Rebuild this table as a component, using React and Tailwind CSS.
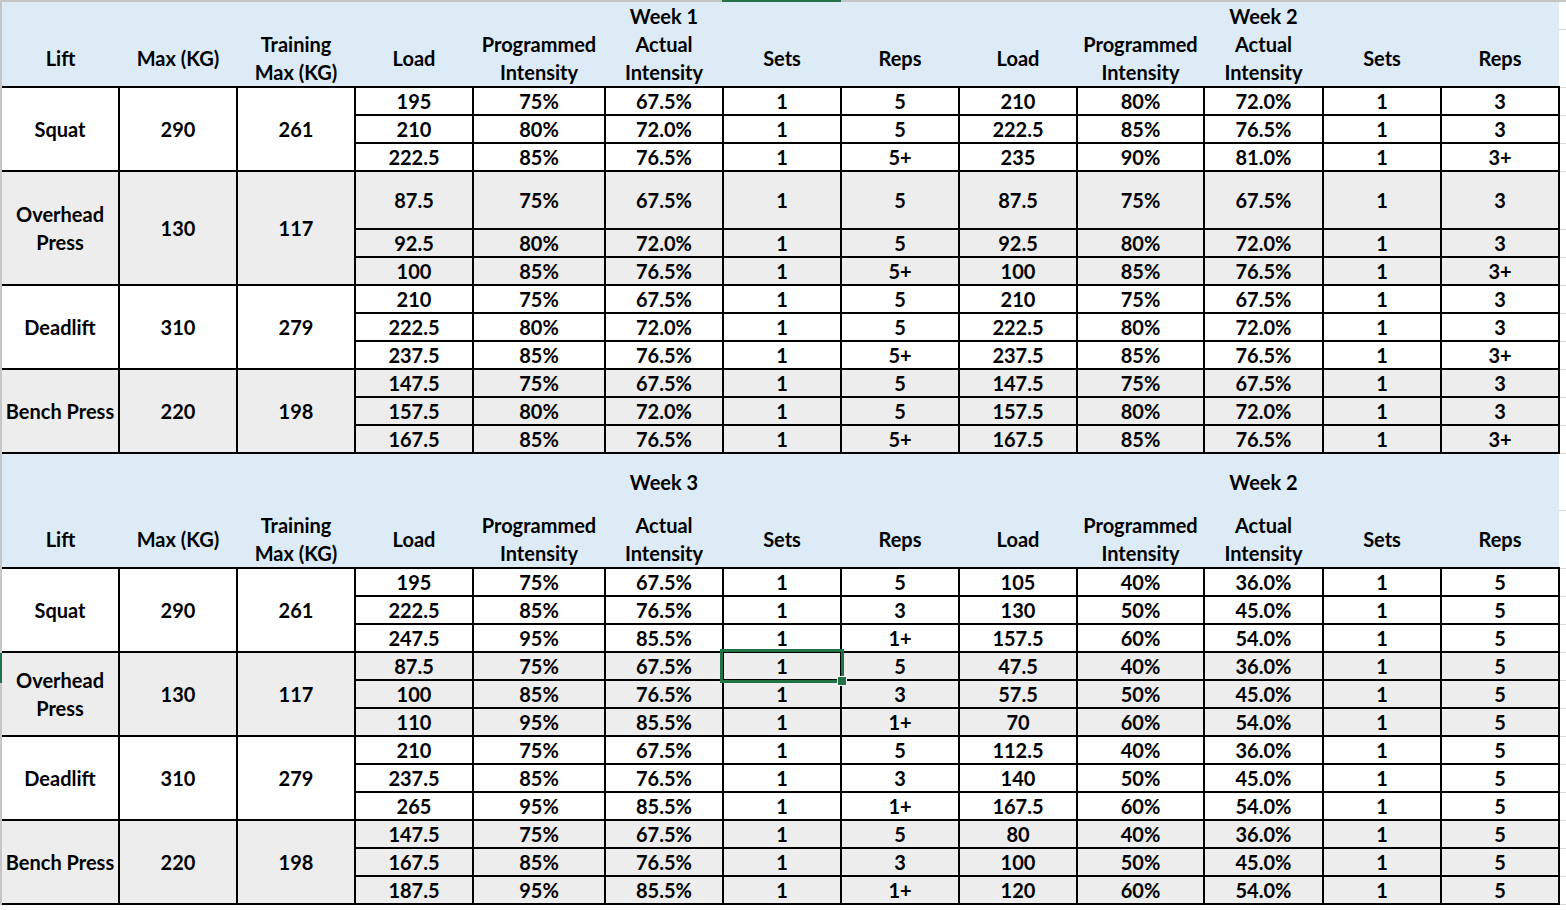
import React from "react";

const COLS = [117, 118, 118, 118, 132, 118, 118, 118, 118, 127, 119, 118, 118];

const SUB = ["Load", ["Programmed", "Intensity"], ["Actual", "Intensity"], "Sets", "Reps"];
const HEAD = ["Lift", "Max (KG)", ["Training", "Max (KG)"], ...SUB, ...SUB];

const TOP = [
  {
    lift: "Squat", max: 290, tm: 261,
    rows: [
      ["195", "75%", "67.5%", "1", "5", "210", "80%", "72.0%", "1", "3"],
      ["210", "80%", "72.0%", "1", "5", "222.5", "85%", "76.5%", "1", "3"],
      ["222.5", "85%", "76.5%", "1", "5+", "235", "90%", "81.0%", "1", "3+"],
    ],
  },
  {
    lift: "Overhead Press", max: 130, tm: 117, tall: true,
    rows: [
      ["87.5", "75%", "67.5%", "1", "5", "87.5", "75%", "67.5%", "1", "3"],
      ["92.5", "80%", "72.0%", "1", "5", "92.5", "80%", "72.0%", "1", "3"],
      ["100", "85%", "76.5%", "1", "5+", "100", "85%", "76.5%", "1", "3+"],
    ],
  },
  {
    lift: "Deadlift", max: 310, tm: 279,
    rows: [
      ["210", "75%", "67.5%", "1", "5", "210", "75%", "67.5%", "1", "3"],
      ["222.5", "80%", "72.0%", "1", "5", "222.5", "80%", "72.0%", "1", "3"],
      ["237.5", "85%", "76.5%", "1", "5+", "237.5", "85%", "76.5%", "1", "3+"],
    ],
  },
  {
    lift: "Bench Press", max: 220, tm: 198,
    rows: [
      ["147.5", "75%", "67.5%", "1", "5", "147.5", "75%", "67.5%", "1", "3"],
      ["157.5", "80%", "72.0%", "1", "5", "157.5", "80%", "72.0%", "1", "3"],
      ["167.5", "85%", "76.5%", "1", "5+", "167.5", "85%", "76.5%", "1", "3+"],
    ],
  },
];

const BOTTOM = [
  {
    lift: "Squat", max: 290, tm: 261,
    rows: [
      ["195", "75%", "67.5%", "1", "5", "105", "40%", "36.0%", "1", "5"],
      ["222.5", "85%", "76.5%", "1", "3", "130", "50%", "45.0%", "1", "5"],
      ["247.5", "95%", "85.5%", "1", "1+", "157.5", "60%", "54.0%", "1", "5"],
    ],
  },
  {
    lift: "Overhead Press", max: 130, tm: 117, selected: true,
    rows: [
      ["87.5", "75%", "67.5%", "1", "5", "47.5", "40%", "36.0%", "1", "5"],
      ["100", "85%", "76.5%", "1", "3", "57.5", "50%", "45.0%", "1", "5"],
      ["110", "95%", "85.5%", "1", "1+", "70", "60%", "54.0%", "1", "5"],
    ],
  },
  {
    lift: "Deadlift", max: 310, tm: 279,
    rows: [
      ["210", "75%", "67.5%", "1", "5", "112.5", "40%", "36.0%", "1", "5"],
      ["237.5", "85%", "76.5%", "1", "3", "140", "50%", "45.0%", "1", "5"],
      ["265", "95%", "85.5%", "1", "1+", "167.5", "60%", "54.0%", "1", "5"],
    ],
  },
  {
    lift: "Bench Press", max: 220, tm: 198,
    rows: [
      ["147.5", "75%", "67.5%", "1", "5", "80", "40%", "36.0%", "1", "5"],
      ["167.5", "85%", "76.5%", "1", "3", "100", "50%", "45.0%", "1", "5"],
      ["187.5", "95%", "85.5%", "1", "1+", "120", "60%", "54.0%", "1", "5"],
    ],
  },
];

function Lines({ value }) {
  if (Array.isArray(value)) {
    return (
      <>
        {value[0]}
        <br />
        {value[1]}
      </>
    );
  }
  return value;
}

function Filler() {
  return <td className="border-b border-[#d9d9d9] bg-white p-0"></td>;
}

function HeaderRows({ weeks, firstHeight, secondHeight }) {
  return (
    <>
      <tr className="bg-[#ddebf7]">
        {COLS.map((_, i) => (
          <td key={i} className={`${firstHeight} p-0 text-center align-middle leading-[20px]`}>
            {i === 5 ? weeks[0] : i === 10 ? weeks[1] : ""}
          </td>
        ))}
        <Filler />
      </tr>
      <tr className="bg-[#ddebf7]">
        {HEAD.map((h, i) => (
          <td key={i} className={`${secondHeight} p-0 text-center align-middle whitespace-nowrap`}>
            <Lines value={h} />
          </td>
        ))}
        <Filler />
      </tr>
    </>
  );
}

function Selection() {
  return (
    <>
      <div className="absolute -left-[4px] -right-[4px] -top-[4px] -bottom-[4px] border-[3px] border-[#217346] pointer-events-none"></div>
      <div className="absolute -right-[7px] -bottom-[7px] w-[10px] h-[10px] bg-[#217346] border border-white"></div>
    </>
  );
}

function Group({ group, shaded }) {
  const bg = shaded ? "bg-[#ededed]" : "bg-white";
  return group.rows.map((row, r) => {
    const h = group.tall && r === 0 ? "h-[58px]" : "h-[28px]";
    return (
      <tr key={r} className={bg}>
        {r === 0 && (
          <>
            <td rowSpan={3} className="border-2 border-black border-l-0 p-0 text-center align-middle leading-[28px]">
              {group.lift === "Overhead Press" ? (
                <>
                  Overhead
                  <br />
                  Press
                </>
              ) : (
                group.lift
              )}
            </td>
            <td rowSpan={3} className="border-2 border-black p-0 text-center align-middle">
              {group.max}
            </td>
            <td rowSpan={3} className="border-2 border-black p-0 text-center align-middle">
              {group.tm}
            </td>
          </>
        )}
        {row.map((v, i) => (
          <td
            key={i}
            className={`${h} border-2 border-black p-0 text-center align-middle leading-none ${
              group.selected && r === 0 && i === 3 ? "relative" : ""
            }`}
          >
            {v}
            {group.selected && r === 0 && i === 3 && <Selection />}
          </td>
        ))}
        <Filler />
      </tr>
    );
  });
}

export default function App() {
  return (
    <div
      className="w-[1566px] h-[910px] overflow-hidden bg-white text-black font-bold text-[20px] leading-[28px]"
      style={{ fontFamily: "Lato, 'Open Sans', sans-serif" }}
    >
      <div className="flex h-[2px] bg-[#c6c6c6]">
        <div className="w-[722px]"></div>
        <div className="w-[119px] bg-[#217346]"></div>
      </div>
      <div className="flex">
        <div className="w-[2px] flex flex-col bg-[#c6c6c6]">
          <div className="h-[651px]"></div>
          <div className="h-[30px] bg-[#217346]"></div>
        </div>
        <table className="table-fixed border-collapse w-[1564px]">
          <colgroup>
            {COLS.map((w, i) => (
              <col key={i} style={{ width: w }} />
            ))}
            <col />
          </colgroup>
          <tbody>
            <HeaderRows weeks={["Week 1", "Week 2"]} firstHeight="h-[27px]" secondHeight="h-[58px]" />
            {TOP.map((g, i) => (
              <Group key={g.lift} group={g} shaded={i % 2 === 1} />
            ))}
            <HeaderRows weeks={["Week 3", "Week 2"]} firstHeight="h-[57px]" secondHeight="h-[58px]" />
            {BOTTOM.map((g, i) => (
              <Group key={g.lift + "b"} group={g} shaded={i % 2 === 1} />
            ))}
          </tbody>
        </table>
      </div>
    </div>
  );
}
